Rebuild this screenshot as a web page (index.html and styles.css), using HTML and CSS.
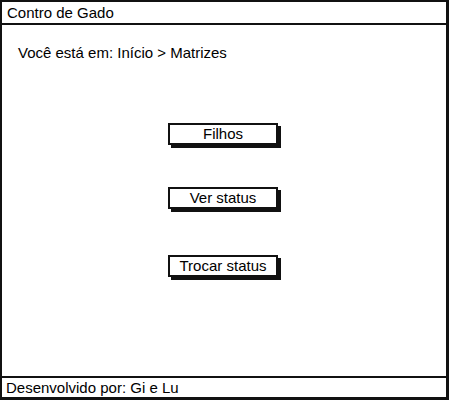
FILE: index.html
```html
<!DOCTYPE html>
<html>
<head>
<meta charset="utf-8">
<link rel="stylesheet" href="styles.css">
</head>
<body>
<div class="window">
  <div class="titlebar">Contro de Gado</div>
  <div class="content">
    <div class="breadcrumb">Você está em: Início &gt; Matrizes</div>
    <div class="actions">
      <button class="btn">Filhos</button>
      <button class="btn">Ver status</button>
      <button class="btn btn-last">Trocar status</button>
    </div>
  </div>
  <div class="footer">Desenvolvido por: Gi e Lu</div>
</div>
</body>
</html>
```

FILE: styles.css
```css
html, body {
  margin: 0;
  padding: 0;
  background: #fff;
}
body {
  font-family: "Liberation Sans", Arial, sans-serif;
  font-size: 15px;
  color: #000;
}
.window {
  width: 449px;
  height: 400px;
  box-sizing: border-box;
  border-left: 2px solid #111;
  border-top: 2px solid #111;
  border-right: 3px solid #111;
  border-bottom: 3px solid #111;
  display: flex;
  flex-direction: column;
}
.titlebar {
  height: 21px;
  line-height: 22px;
  padding-left: 5px;
  border-bottom: 2px solid #111;
}
.content {
  flex: 1;
  display: flex;
  flex-direction: column;
}
.breadcrumb {
  margin-top: 19px;
  padding-left: 16px;
  line-height: 17px;
}
.actions {
  display: flex;
  flex-direction: column;
  align-items: center;
  gap: 42px;
  margin-top: 62px;
  padding-right: 2px;
}
.btn {
  font-family: "Liberation Sans", Arial, sans-serif;
  font-size: 15px;
  color: #000;
  width: 110px;
  height: 22px;
  padding: 0;
  background: #fff;
  border: 2px solid #111;
  box-shadow: 3px 3px 0 #111;
  line-height: 18px;
}
.btn-last {
  margin-top: 4px;
}
.footer {
  height: 19px;
  line-height: 20px;
  padding-left: 4px;
  border-top: 2px solid #111;
}
```
